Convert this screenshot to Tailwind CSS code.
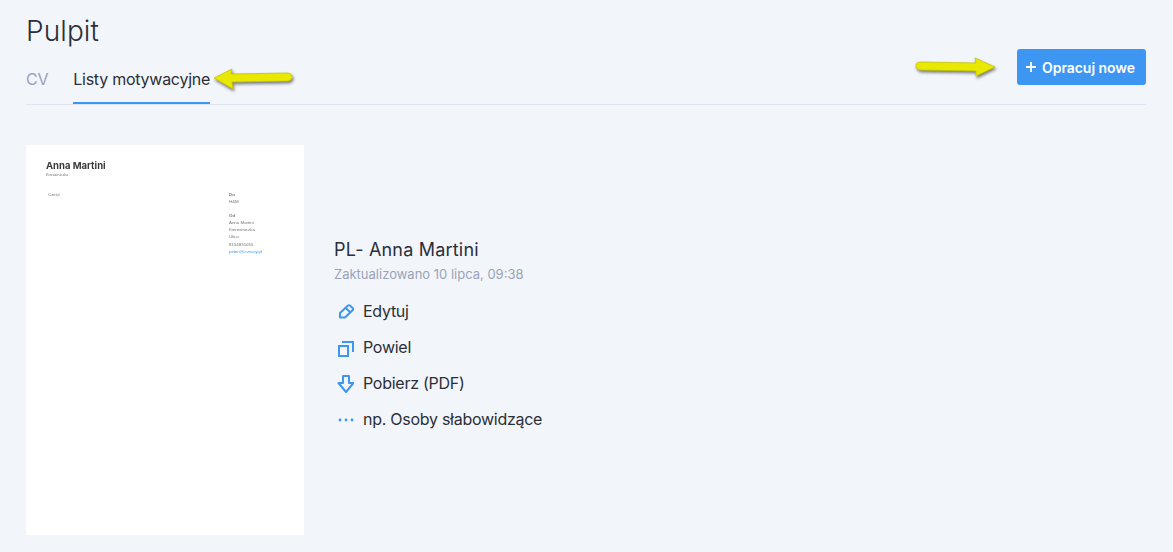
<!DOCTYPE html>
<html lang="pl">
<head>
	<meta charset="UTF-8">
	<meta name="viewport" content="width=device-width, initial-scale=1.0">
	<title>Pulpit</title>
	<script src="https://cdn.jsdelivr.net/npm/@tailwindcss/browser@4"></script>
</head>
<body class="bg-[#f2f5fa] text-[#2a2f38] font-['Inter',sans-serif] h-[552px] overflow-hidden">

<div class="relative pl-[26px] pr-[27px] pt-[13px]">
	<h1 class="text-[28px] leading-[36px] font-light tracking-[0.1px]">Pulpit</h1>

	<div class="flex items-end justify-between border-b border-[#dfe4f3] h-[56px]">
		<div class="flex gap-[25px] text-[16px] tracking-[-0.25px]">
			<a class="h-[37px] text-[#9aa3b8]">CV</a>
			<a class="h-[37px] border-b-2 border-[#3d96f2] -mb-px">Listy motywacyjne</a>
		</div>
		<button class="mb-[19px] h-[36px] w-[129px] bg-[#3d96f2] text-white rounded-[3px] text-[14px] tracking-[-0.05px] font-semibold flex items-center gap-[6px] pl-[9px]">
			<svg class="w-[10px] h-[10px]" viewBox="0 0 10 10" fill="none" stroke="white" stroke-width="1.8"><path d="M5 0v10M0 5h10"/></svg>
			Opracuj nowe
		</button>
	</div>

	<!-- annotation arrows -->
	<svg class="absolute left-[210px] top-[65px] w-[90px] h-[30px] drop-shadow-[1px_2px_1.5px_rgba(0,0,0,0.5)]" viewBox="0 0 90 30" fill="none">
		<path d="M4 13 L22 4 L21 9 L78 8 Q83 9 82 13 Q81 16 78 16 L22 17 L23 24 Z" fill="#e8e800" stroke="#c4c400" stroke-width="0.8"/>
	</svg>
	<svg class="absolute left-[910px] top-[54px] w-[90px] h-[30px] drop-shadow-[1px_2px_1.5px_rgba(0,0,0,0.5)]" viewBox="0 0 90 30" fill="none">
		<path d="M6 10 Q7 8 10 8 L66 9 L65 4 L85 13 L66 22 L66 17 L10 16 Q6 15 6 12 Z" fill="#e8e800" stroke="#c4c400" stroke-width="0.8"/>
	</svg>

	<div class="flex items-center mt-[40px]">
		<!-- letter thumbnail -->
		<div class="w-[278px] h-[390px] bg-white px-[20px] pt-[15px] text-[#777] shrink-0">
			<div class="text-[9.5px] leading-[12px] font-bold text-[#3a3a3a] blur-[0.2px]">Anna Martini</div>
			<div class="text-[3.8px] leading-[5px] mt-px blur-[0.3px] font-['Liberation_Sans',sans-serif]">Kierowniczka</div>
			<div class="flex mt-[13px] text-[4.4px] leading-[7.1px] blur-[0.3px] font-['Liberation_Sans',sans-serif]">
				<div class="w-[183px] pl-[2px]">Cześć</div>
				<div>
					<div class="font-bold">Do</div>
					<div>H&amp;M</div>
					<div class="font-bold mt-[7px]">Od</div>
					<div>Anna Martini</div>
					<div>Kierowniczka</div>
					<div>Ulica</div>
					<div>8154831055</div>
					<div class="text-[#3d96f2]">pelen@cvessy.pl</div>
				</div>
			</div>
		</div>

		<div class="ml-[30px] mb-[6px]">
			<h2 class="text-[18px] leading-[24px] tracking-[0.2px]">PL- Anna Martini</h2>
			<p class="text-[13px] leading-[20px] text-[#9aa3b8] mt-[2px]">Zaktualizowano 10 lipca, 09:38</p>
			<ul class="mt-[9px] text-[16px] leading-[36px] tracking-[-0.27px]">
				<li class="flex items-center gap-[9px] h-[36px]">
					<svg class="w-[20px] h-[20px]" viewBox="0 0 20 20" fill="none" stroke="#3d96f2" stroke-width="2" stroke-linejoin="round"><path d="M6 12 L14 4.5 Q15 3.8 16 4.5 L18.8 7.2 Q19.5 8 18.8 9 L11 16.5 L6 16.5 Z M11.5 6.8 L16.5 11.5"/></svg>
					Edytuj
				</li>
				<li class="flex items-center gap-[9px] h-[36px]">
					<svg class="w-[20px] h-[20px]" viewBox="0 0 20 20" fill="none" stroke="#3d96f2" stroke-width="2"><path d="M5 9h9v10H5z"/><path d="M8 5H19V15"/></svg>
					Powiel
				</li>
				<li class="flex items-center gap-[9px] h-[36px]">
					<svg class="w-[20px] h-[20px]" viewBox="0 0 20 20" fill="none" stroke="#3d96f2" stroke-width="2" stroke-linejoin="round"><path d="M9 3h6v7h4.5L12 19 4.5 10H9z"/></svg>
					Pobierz (PDF)
				</li>
				<li class="flex items-center gap-[9px] h-[36px]">
					<svg class="w-[20px] h-[20px]" viewBox="0 0 20 20" fill="#3d96f2"><circle cx="6" cy="11" r="1.4"/><circle cx="12" cy="11" r="1.4"/><circle cx="18" cy="11" r="1.4"/></svg>
					np. Osoby słabowidzące
				</li>
			</ul>
		</div>
	</div>
</div>

</body>
</html>
